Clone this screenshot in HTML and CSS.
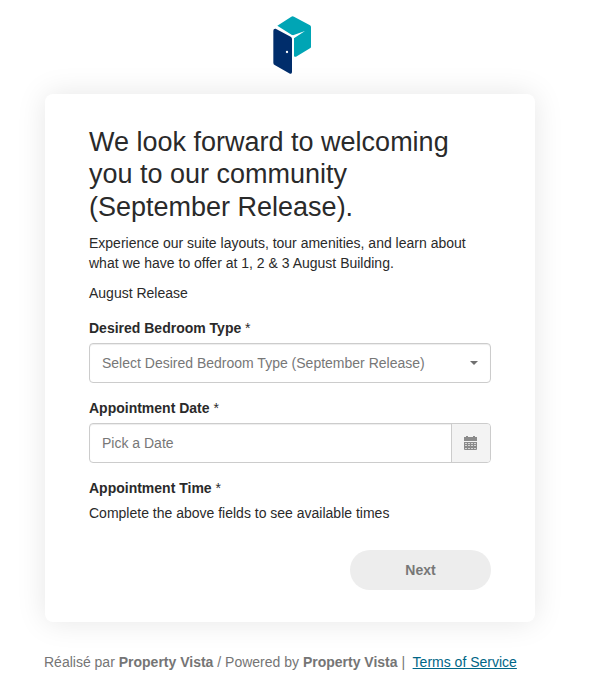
FILE: index.html
```html
<!DOCTYPE html>
<html lang="en">
<head>
<meta charset="utf-8">
<title>Book an appointment</title>
<link rel="stylesheet" href="styles.css">
</head>
<body>
<header class="header">
  <svg class="logo" viewBox="30 21 120 180" role="img" aria-label="Property Vista">
    <path fill="#00a5b5" d="M46 53 L88 26 Q92 23 96 26 L144 52 Q147 54 147 58 V116 Q147 119 144 121 L102 146 Q97 148 96 143 V88 Q96 84 91 82 Z"/>
    <path fill="#fff" d="M84 80 L93 82 L129 69 L97 90 L88 88 Z"/>
    <path fill="#002d6b" d="M34 68 Q34 61 41 62 L86 86 Q90 88 90 93 V192 Q90 199 84 197 L38 171 Q34 169 34 164 Z"/>
    <circle cx="75" cy="132" r="3.5" fill="#fff"/>
  </svg>
</header>
<main class="card">
  <h1 class="title">We look forward to welcoming you to our community (September Release).</h1>
  <p class="text">Experience our suite layouts, tour amenities, and learn about what we have to offer at 1, 2 &amp; 3 August Building.</p>
  <p class="text">August Release</p>
  <form class="form">
    <div class="group">
      <div class="label"><b>Desired Bedroom Type</b> *</div>
      <div class="control">
        <span class="value">Select Desired Bedroom Type (September Release)</span>
        <span class="caret"></span>
      </div>
    </div>
    <div class="group">
      <div class="label"><b>Appointment Date</b> *</div>
      <div class="control">
        <span class="value">Pick a Date</span>
        <span class="addon">
          <svg class="calendar" viewBox="0 0 14 14">
            <path fill="#8b8b8b" d="M0 1H2V0H4V1H9V0H11V1H13V5H0Z"/>
            <path fill="#8b8b8b" d="M0 6H13V13Q13 14 12 14H1Q0 14 0 13Z"/>
            <path stroke="#d6d6d6" stroke-width="1" stroke-dasharray="2 1" d="M1 7.5H12M1 9.5H12M1 12.5H12"/>
          </svg>
        </span>
      </div>
    </div>
    <div class="group">
      <div class="label"><b>Appointment Time</b> *</div>
      <p class="hint">Complete the above fields to see available times</p>
    </div>
    <div class="actions"><button class="next" type="button">Next</button></div>
  </form>
</main>
<footer class="footer">Réalisé par <b>Property Vista</b> / Powered by <b>Property Vista</b> |&nbsp; <a class="link" href="#">Terms of Service</a></footer>
</body>
</html>
```
FILE: styles.css
```css
* { box-sizing: border-box; }

body {
  margin: 0;
  background: #fff;
  color: #2a2a2a;
  font: 14px/20px "Liberation Sans", Arial, sans-serif;
}

.header {
  height: 94px;
  padding: 15px 0 0 272px;
}

.logo {
  display: block;
  width: 40px;
  height: 60px;
}

.card {
  width: 490px;
  height: 528px;
  margin-left: 45px;
  padding: 32px 44px;
  background: #fff;
  border-radius: 8px;
  box-shadow: 0 0 30px rgba(0, 0, 0, 0.1);
}

.title {
  margin: 0 0 10px;
  font-size: 27px;
  font-weight: 400;
  line-height: 32.4px;
}

.text { margin: 0 0 10px; }

.form { margin-top: 15px; }

.group { margin-bottom: 15px; }

.label { margin-bottom: 5px; }

.control {
  display: flex;
  align-items: center;
  height: 40px;
  padding-left: 12px;
  border: 1px solid #ccc;
  border-radius: 4px;
  box-shadow: inset 0 1px 1px rgba(0, 0, 0, 0.075);
  overflow: hidden;
}

.value {
  flex: 1;
  color: #777;
}

.caret {
  margin-right: 12px;
  border-top: 4px solid #707070;
  border-right: 4px solid transparent;
  border-left: 4px solid transparent;
}

.addon {
  display: flex;
  align-items: center;
  justify-content: center;
  align-self: stretch;
  width: 39px;
  border-left: 1px solid #ccc;
  background: #f3f3f3;
}

.calendar {
  width: 14px;
  height: 14px;
}

.hint { margin: 0; }

.actions {
  display: flex;
  justify-content: flex-end;
  margin-top: 27px;
}

.next {
  width: 141px;
  height: 40px;
  border: 0;
  border-radius: 20px;
  background: #ededed;
  color: #777;
  font: bold 14px/20px "Liberation Sans", Arial, sans-serif;
}

.footer {
  padding: 30px 0 0 44px;
  color: #757575;
}

.link {
  color: #006687;
  text-decoration: underline;
}
```
